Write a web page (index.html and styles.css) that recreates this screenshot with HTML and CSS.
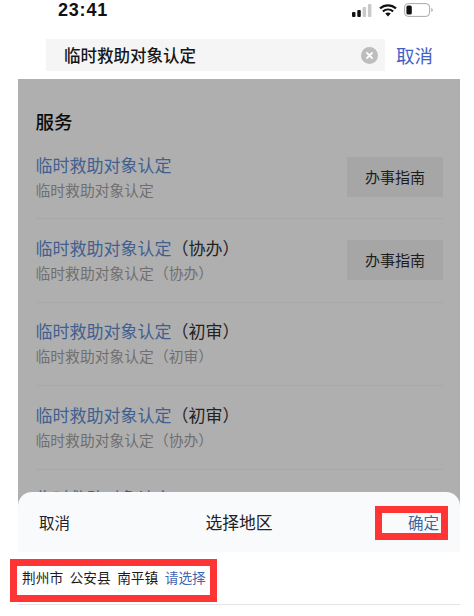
FILE: index.html
```html
<!DOCTYPE html>
<html lang="zh">
<head>
<meta charset="utf-8">
<title>搜索</title>
<link rel="stylesheet" href="styles.css">
</head>
<body>
<div class="page">
  <header class="status">
    <span class="time">23:41</span>
    <div class="status-icons">
      <svg class="signal" width="20" height="13" viewBox="0 0 20 13"><rect x="0" y="8" width="3.500" height="5" rx="1" fill="#111"/><rect x="5.300" y="6" width="3.500" height="7" rx="1" fill="#111"/><rect x="10.600" y="3" width="3.500" height="10" rx="1" fill="#c9c9c9"/><rect x="15.900" y="0" width="3.500" height="13" rx="1" fill="#c9c9c9"/></svg>
      <svg class="wifi" width="18" height="13" viewBox="0 0 18 13"><path d="M1 4.400C5.600.3 12.400.3 17 4.400M3.900 7.400c3-2.600 7.200-2.600 10.200 0" fill="none" stroke="#111" stroke-width="2.100"/><path d="M6.200 9.600c1.700-1.400 3.900-1.400 5.600 0L9 12.600z" fill="#111"/></svg>
      <svg class="battery" width="29" height="14" viewBox="0 0 29 14"><rect x=".6" y=".6" width="25" height="12.800" rx="3.600" fill="#fff" stroke="#a9a9a9" stroke-width="1"/><rect x="2.400" y="2.400" width="5.400" height="9.200" rx="1.600" fill="#111"/><path d="M27.300 5v4c.9-.3 1.400-1.100 1.400-2s-.5-1.700-1.400-2z" fill="#a9a9a9"/></svg>
    </div>
  </header>

  <div class="search-row">
    <div class="search-box">
      <span class="query">临时救助对象认定</span>
      <svg class="clear" width="17" height="17" viewBox="0 0 17 17"><circle cx="8.500" cy="8.500" r="8.500" fill="#bdbdbd"/><path d="M6 6l5 5M11 6l-5 5" stroke="#fff" stroke-width="1.800" stroke-linecap="round"/></svg>
    </div>
    <span class="search-cancel">取消</span>
  </div>

  <main class="stage">
    <div class="results">
      <h2 class="section-title">服务</h2>
      <div class="row">
        <div class="row-text">
          <div class="row-title">临时救助对象认定</div>
          <div class="row-sub">临时救助对象认定</div>
        </div>
        <span class="guide">办事指南</span>
      </div>
      <div class="row">
        <div class="row-text">
          <div class="row-title">临时救助对象认定<span class="suffix">（协办）</span></div>
          <div class="row-sub">临时救助对象认定（协办）</div>
        </div>
        <span class="guide">办事指南</span>
      </div>
      <div class="row">
        <div class="row-text">
          <div class="row-title">临时救助对象认定<span class="suffix">（初审）</span></div>
          <div class="row-sub">临时救助对象认定（初审）</div>
        </div>
      </div>
      <div class="row">
        <div class="row-text">
          <div class="row-title">临时救助对象认定<span class="suffix">（初审）</span></div>
          <div class="row-sub">临时救助对象认定（协办）</div>
        </div>
      </div>
      <div class="row">
        <div class="row-text">
          <div class="row-title">临时救助对象认定</div>
        </div>
      </div>
    </div>
    <div class="sheet-head">
      <span class="sheet-cancel">取消</span>
      <span class="sheet-title">选择地区</span>
      <span class="sheet-ok">确定</span>
    </div>
  </main>

  <div class="picker">
    <span class="region">荆州市</span>
    <span class="region">公安县</span>
    <span class="region">南平镇</span>
    <span class="choose">请选择</span>
  </div>

  <div class="mark mark-ok"></div>
  <div class="mark mark-picker"></div>
</div>
</body>
</html>
```

FILE: styles.css
```css
* { box-sizing: border-box; }
html, body { margin: 0; padding: 0; background: #fff; }
body { font-family: "Noto Sans CJK SC", "Noto Sans", sans-serif; color: #111; }
.page { position: relative; width: 474px; height: 616px; overflow: hidden; }

.status { height: 39px; display: flex; justify-content: space-between; align-items: flex-start; padding: 0 41px 0 58px; }
.time { font: 700 18px/20px "Liberation Sans", sans-serif; letter-spacing: .8px; }
.status-icons { display: flex; align-items: center; gap: 7px; padding-top: 3px; }

.search-row { height: 40px; display: flex; align-items: flex-start; padding-left: 46px; }
.search-box { width: 339px; height: 32px; background: #f5f5f5; display: flex; align-items: center; justify-content: space-between; padding: 0 7px 0 18px; }
.query { font-size: 16.500px; line-height: 32px; font-weight: 500; color: #161616; }
.search-cancel { margin-left: 11px; font-size: 18.500px; line-height: 32px; color: #3f62c4; }

.stage { width: 442px; height: 473px; margin-left: 18px; background: #afafaf; display: flex; flex-direction: column; overflow: hidden; }
.results { flex: 1; min-height: 0; overflow: hidden; padding: 0 17px 0 17.500px; }
.section-title { margin: 0; height: 64px; padding-top: 29px; font-size: 18.500px; line-height: 26px; font-weight: 500; color: #0c0c0c; }
.row { height: 83.600px; padding-top: 16.500px; border-bottom: 1px solid #a8a8a8; display: flex; justify-content: space-between; align-items: flex-start; }
.row:first-of-type { height: 76px; padding-top: 10px; }
.row-title { font-size: 17px; line-height: 24px; color: #41608f; white-space: nowrap; }
.suffix { color: #222; }
.row-sub { font-size: 14.800px; line-height: 22px; margin-top: 2px; color: #6f6f6f; white-space: nowrap; }
.guide { width: 96px; height: 40px; margin-top: 4px; background: #a6a6a6; font-size: 15px; line-height: 40px; text-align: center; color: #1d1d1d; }

.sheet-head { flex: none; height: 60px; background: #f9fafc; border-radius: 14px 14px 0 0; display: grid; grid-template-columns: 1fr auto 1fr; align-items: center; padding: 0 21px; font-size: 15.500px; color: #222; }
.sheet-title { font-size: 16.800px; line-height: 20px; }
.sheet-ok { justify-self: end; color: #41659f; }

.picker { height: 53px; margin-left: 18px; width: 442px; border-bottom: 1px solid #e4e4e4; display: flex; align-items: center; gap: 6.500px; padding: 0 0 3px 4px; font-size: 13.700px; color: #1c1c1c; }
.choose { color: #3f66b4; }

.mark { position: absolute; border: 7px solid #ff3434; }
.mark-ok { left: 375px; top: 506px; width: 73px; height: 34px; }
.mark-picker { left: 10px; top: 559px; width: 207px; height: 43px; }
```
